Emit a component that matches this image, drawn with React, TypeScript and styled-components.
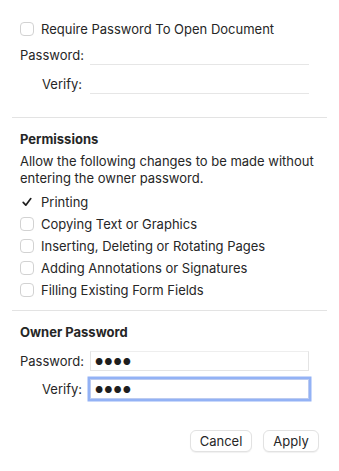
import React from "react";
import styled, { createGlobalStyle } from "styled-components";

const GlobalStyle = createGlobalStyle`
  html, body {
    margin: 0;
    padding: 0;
    background: #ffffff;
  }
  body {
    font-family: Inter, "Liberation Sans", sans-serif;
    font-size: 13px;
    color: #262626;
  }
`;

const Sheet = styled.div`
  width: 339px;
  height: 471px;
  box-sizing: border-box;
  padding: 0 12px;
  display: flex;
  flex-direction: column;
`;

const Section = styled.div<{ $pt: number; $pb: number }>`
  padding: ${(p) => p.$pt}px 8px ${(p) => p.$pb}px;
  display: flex;
  flex-direction: column;
`;

const Separator = styled.div`
  height: 1px;
  background: #e3e3e3;
`;

const CheckRow = styled.label`
  display: flex;
  align-items: center;
  gap: 7px;
  height: 22px;
  line-height: 16px;
`;

const CheckList = styled.div`
  display: flex;
  flex-direction: column;
  margin-top: 4px;
`;

const Box = styled.span<{ $checked?: boolean }>`
  width: 14px;
  height: 14px;
  box-sizing: border-box;
  border: 1px solid #d2d2d2;
  border-radius: 4px;
  background: #fff;
  display: flex;
  align-items: center;
  justify-content: center;
  flex: none;
  ${(p) => (p.$checked ? "border-color: transparent;" : "")}
`;

const Fields = styled.div<{ $pt: number }>`
  display: flex;
  flex-direction: column;
  padding-top: ${(p) => p.$pt}px;
`;

const FieldRow = styled.div<{ $h: number }>`
  display: grid;
  grid-template-columns: 62px 1fr;
  align-items: center;
  column-gap: 8px;
  height: ${(p) => p.$h}px;
`;

const Label = styled.span`
  text-align: right;
  white-space: nowrap;
`;

const LineField = styled.div`
  height: 20px;
  border-bottom: 1px solid #e6e6e6;
  margin-right: 10px;
`;

const BoxField = styled.div<{ $focused?: boolean }>`
  height: 20px;
  box-sizing: border-box;
  margin-right: 10px;
  display: flex;
  align-items: center;
  padding-left: 4px;
  background: #fff;
  border: 1px solid #e4e4e4;
  border-top-color: #eeeeee;
  ${(p) =>
    p.$focused
      ? `
    border: 1px solid #bccbf0;
    box-shadow: 0 0 0 2.5px #93b2f5;
  `
      : ""}
`;

const Dots = styled.span`
  font-size: 9px;
  letter-spacing: 1px;
  color: #1e1e1e;
  line-height: 1;
`;

const Heading = styled.div`
  font-weight: 700;
  height: 22px;
  display: flex;
  align-items: center;
`;

const Text = styled.p`
  margin: 3px 0 0;
  line-height: 17px;
`;

const Footer = styled.div`
  display: flex;
  justify-content: flex-end;
  gap: 11px;
  padding: 27px 8px 0;
`;

const Button = styled.button<{ $w: number }>`
  width: ${(p) => p.$w}px;
  height: 22px;
  font: inherit;
  color: #262626;
  background: #fff;
  border: 1px solid #e2e2e2;
  border-radius: 6px;
  box-shadow: 0 1px 1px rgba(0, 0, 0, 0.06);
  padding: 0;
`;

function Check({ checked, label }: { checked?: boolean; label: string }) {
  return (
    <CheckRow>
      <Box $checked={checked}>
        {checked && (
          <svg width="12" height="12" viewBox="0 0 12 12">
            <path d="M2.2 6.4 L4.8 9.2 L9.8 2.6" fill="none" stroke="#1f1f1f" strokeWidth="1.7" strokeLinecap="round" strokeLinejoin="round" />
          </svg>
        )}
      </Box>
      {label}
    </CheckRow>
  );
}

const permissions = [
  { label: "Printing", checked: true },
  { label: "Copying Text or Graphics" },
  { label: "Inserting, Deleting or Rotating Pages" },
  { label: "Adding Annotations or Signatures" },
  { label: "Filling Existing Form Fields" },
];

export default function App() {
  return (
    <>
      <GlobalStyle />
      <Sheet>
        <Section $pt={18} $pb={19}>
          <Check label="Require Password To Open Document" />
          <Fields $pt={0}>
            <FieldRow $h={29}>
              <Label>Password:</Label>
              <LineField />
            </FieldRow>
            <FieldRow $h={29}>
              <Label>Verify:</Label>
              <LineField />
            </FieldRow>
          </Fields>
        </Section>
        <Separator />
        <Section $pt={10} $pb={9}>
          <Heading>Permissions</Heading>
          <Text>
            Allow the following changes to be made without
            <br />
            entering the owner password.
          </Text>
          <CheckList>
            {permissions.map((p) => (
              <Check key={p.label} label={p.label} checked={p.checked} />
            ))}
          </CheckList>
        </Section>
        <Separator />
        <Section $pt={10} $pb={0}>
          <Heading>Owner Password</Heading>
          <Fields $pt={4}>
            <FieldRow $h={28}>
              <Label>Password:</Label>
              <BoxField>
                <Dots>●●●●</Dots>
              </BoxField>
            </FieldRow>
            <FieldRow $h={28}>
              <Label>Verify:</Label>
              <BoxField $focused>
                <Dots>●●●●</Dots>
              </BoxField>
            </FieldRow>
          </Fields>
        </Section>
        <Footer>
          <Button $w={62}>Cancel</Button>
          <Button $w={56}>Apply</Button>
        </Footer>
      </Sheet>
    </>
  );
}
